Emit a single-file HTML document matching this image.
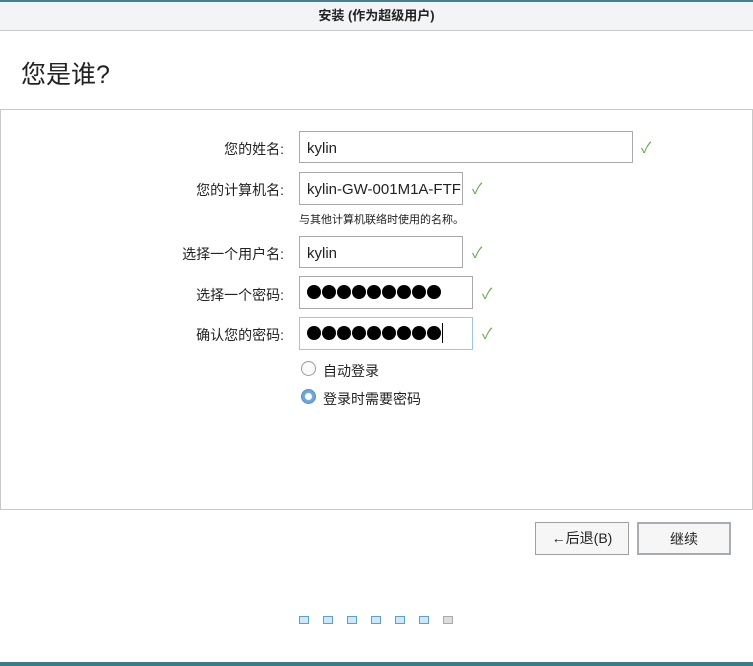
<!DOCTYPE html><html><head><meta charset="utf-8"><style>
*{box-sizing:border-box;margin:0;padding:0}
body{width:753px;height:666px;position:relative;background:#fff;font-family:"Liberation Sans","Noto Sans CJK SC",sans-serif;overflow:hidden;color:#222}
.a{position:absolute}
.tb{left:0;top:0;width:753px;height:31px;background:#f3f4f5;border-top:2px solid #4a7f8f;border-bottom:1px solid #c8cbcd;text-align:center;font-size:13px;font-weight:bold;line-height:28px}
.lbl{font-size:14px;text-align:right;width:200px;left:84px}
.in{border:1px solid #a9a9a9;background:#fff;font-size:15px;padding-left:7px;line-height:33px}
.ck{color:#6aa84f;font-size:15px}
.dot{width:10px;height:8px;background:#cfe8f7;border:1px solid #5aa0c8;top:616px}
.btn{border:1px solid #a0a0a0;background:#f6f6f6;font-size:14px;text-align:center;line-height:31px}
.pw{padding-left:7px;padding-top:8px}
.pw i{display:inline-block;width:14px;height:14px;border-radius:50%;background:#000;margin-right:1px;vertical-align:top}
</style></head><body>
<div class="a tb">安装 (作为超级用户)</div>
<div class="a" style="left:21px;top:55px;font-size:25px">您是谁?</div>
<div class="a" style="left:0;top:109px;width:753px;height:401px;border:1px solid #c8c8c8"></div>
<div class="a lbl" style="top:139px">您的姓名:</div>
<div class="a in" style="left:299px;top:131px;width:334px;height:32px">kylin</div>
<div class="a ck" style="left:641px;top:137px">✓</div>
<div class="a lbl" style="top:180px">您的计算机名:</div>
<div class="a in" style="left:299px;top:172px;width:164px;height:33px">kylin-GW-001M1A-FTF</div>
<div class="a ck" style="left:472px;top:178px">✓</div>
<div class="a" style="left:299px;top:211px;font-size:11px">与其他计算机联络时使用的名称。</div>
<div class="a lbl" style="top:244px">选择一个用户名:</div>
<div class="a in" style="left:299px;top:236px;width:164px;height:32px">kylin</div>
<div class="a ck" style="left:472px;top:242px">✓</div>
<div class="a lbl" style="top:285px">选择一个密码:</div>
<div class="a in pw" style="left:299px;top:276px;width:174px;height:33px"><i></i><i></i><i></i><i></i><i></i><i></i><i></i><i></i><i></i></div>
<div class="a ck" style="left:482px;top:283px">✓</div>
<div class="a lbl" style="top:325px">确认您的密码:</div>
<div class="a in pw" style="left:299px;top:317px;width:174px;height:33px;border-color:#9cc4e4"><i></i><i></i><i></i><i></i><i></i><i></i><i></i><i></i><i></i><span style="display:inline-block;width:1px;height:20px;background:#000;vertical-align:top;margin-top:-3px"></span></div>
<div class="a ck" style="left:482px;top:323px">✓</div>
<div class="a" style="left:301px;top:361px;width:15px;height:15px;border-radius:50%;border:1px solid #999;background:#fafafa"></div>
<div class="a" style="left:323px;top:361px;font-size:14px">自动登录</div>
<div class="a" style="left:301px;top:389px;width:15px;height:15px;border-radius:50%;border:1px solid #5a8fc0;background:radial-gradient(circle,#fff 0 3px,#6ea6dc 4px)"></div>
<div class="a" style="left:323px;top:389px;font-size:14px">登录时需要密码</div>
<div class="a btn" style="left:535px;top:522px;width:94px;height:33px">←后退(B)</div>
<div class="a btn" style="left:637px;top:522px;width:94px;height:33px;border:2px solid #a8acb4">继续</div>
<div class="a dot" style="left:299px"></div><div class="a dot" style="left:323px"></div><div class="a dot" style="left:347px"></div><div class="a dot" style="left:371px"></div><div class="a dot" style="left:395px"></div><div class="a dot" style="left:419px"></div><div class="a dot" style="left:443px;background:#ddd;border-color:#aaa"></div>
<div class="a" style="left:0;top:662px;width:753px;height:4px;background:#3d7a8a"></div>
</body></html>
